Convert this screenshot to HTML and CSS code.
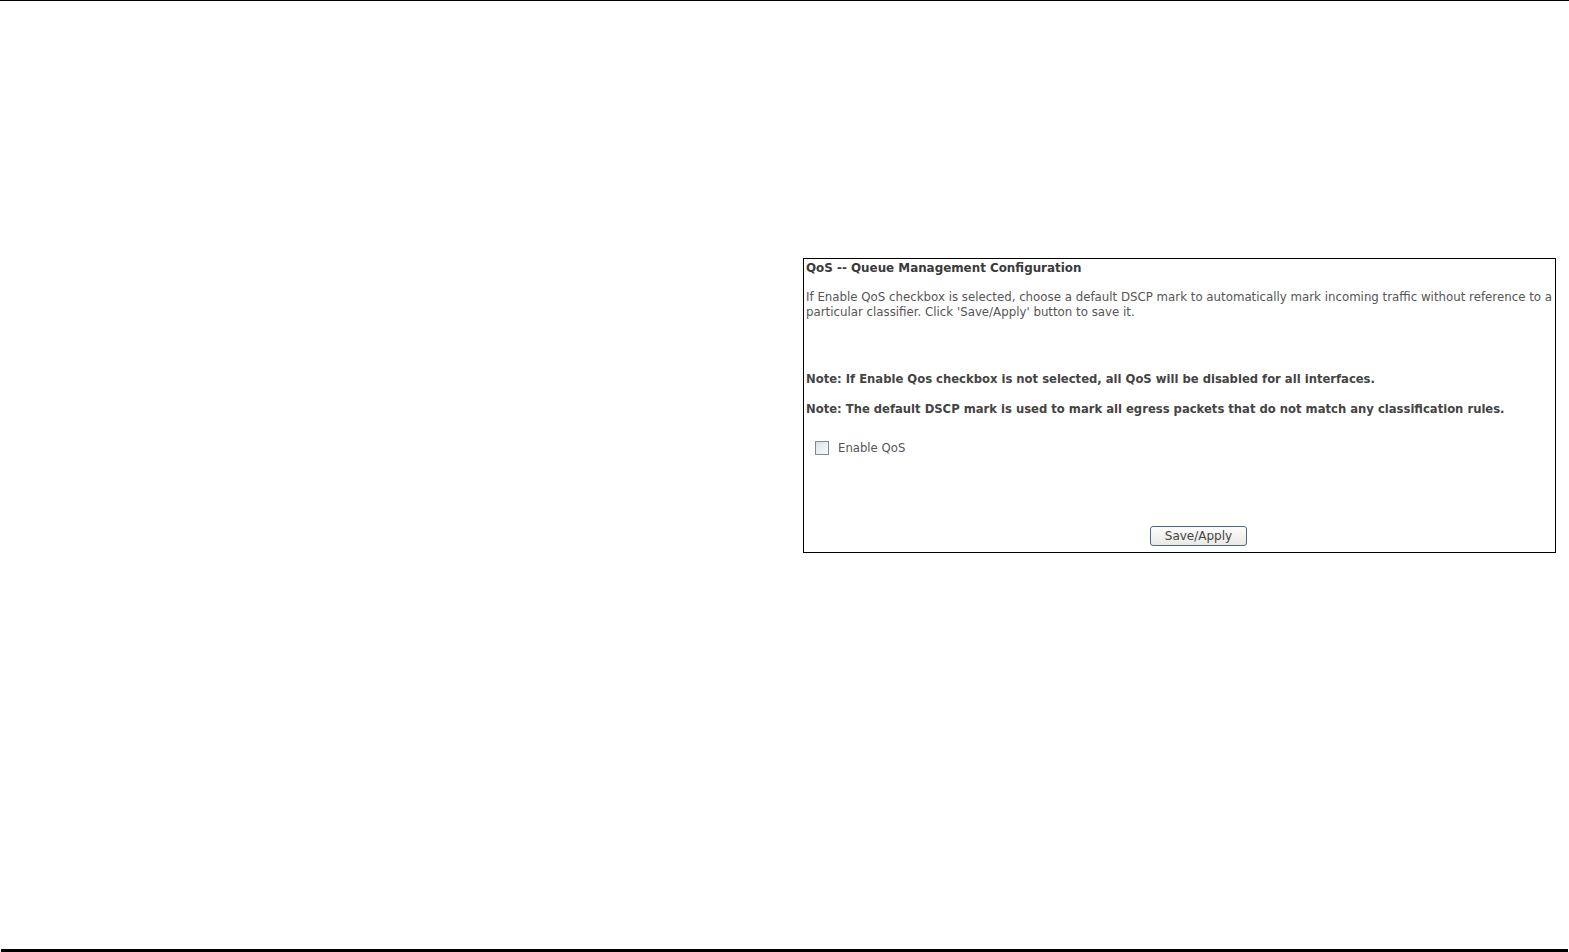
FILE: index.html
```html
<!DOCTYPE html>
<html>
<head>
<meta charset="utf-8">
<link rel="stylesheet" href="styles.css">
<title>QoS</title>
</head>
<body>
<div class="rule-top"></div>
<div class="page">
  <div class="panel">
    <div class="title">QoS -- Queue Management Configuration</div>
    <p class="desc">If Enable QoS checkbox is selected, choose a default DSCP mark to automatically mark incoming traffic without reference to a particular classifier. Click 'Save/Apply' button to save it.</p>
    <div class="note note-first">Note: If Enable Qos checkbox is not selected, all QoS will be disabled for all interfaces.</div>
    <div class="note note-second">Note: The default DSCP mark is used to mark all egress packets that do not match any classification rules.</div>
    <label class="check-row"><span class="checkbox"></span><span class="check-label">Enable QoS</span></label>
    <div class="actions"><button class="btn" type="button">Save/Apply</button></div>
  </div>
</div>
<div class="rule-bottom"></div>
</body>
</html>
```
FILE: styles.css
```css
html, body {
  margin: 0;
  padding: 0;
  background: #fff;
}
body {
  width: 1569px;
  height: 952px;
  display: flex;
  flex-direction: column;
  font-family: "DejaVu Sans", Verdana, sans-serif;
  overflow: hidden;
}
.rule-top {
  height: 1px;
  background: #000;
  flex: none;
}
.page {
  flex: 1;
  padding: 257px 0 0 803px;
}
.panel {
  box-sizing: border-box;
  width: 753px;
  height: 295px;
  border: 1px solid #000;
  padding: 1px 0 0 2px;
  display: flex;
  flex-direction: column;
}
.title {
  font-size: 11.9px;
  font-weight: bold;
  line-height: 16px;
  color: #3a3a3a;
}
.desc {
  margin: 14px 0 0 0;
  font-size: 11.8px;
  line-height: 15px;
  color: #555;
}
.note {
  font-size: 11.6px;
  font-weight: bold;
  line-height: 16px;
  color: #444;
}
.note-first { margin-top: 51px; }
.note-second { margin-top: 14px; }
.check-row {
  margin: 23px 0 0 9px;
  display: flex;
  align-items: center;
  height: 16px;
  gap: 9px;
}
.checkbox {
  box-sizing: border-box;
  width: 14px;
  height: 14px;
  border: 1px solid #7f8a96;
  background: linear-gradient(135deg, #dcdfe3, #fbfbfb);
}
.check-label {
  font-size: 11.7px;
  color: #555;
}
.actions {
  margin-top: 69px;
  padding-left: 344px;
}
.btn {
  box-sizing: border-box;
  width: 97px;
  height: 20px;
  border: 1px solid #4d6785;
  border-radius: 3px;
  background: linear-gradient(#fdfdfd, #e8e8e4);
  font-family: "DejaVu Sans", Verdana, sans-serif;
  font-size: 12px;
  color: #444;
  padding: 0;
}
.rule-bottom {
  flex: none;
  height: 3px;
  margin: 0 1px 0 1px;
  background: #000;
}
```
